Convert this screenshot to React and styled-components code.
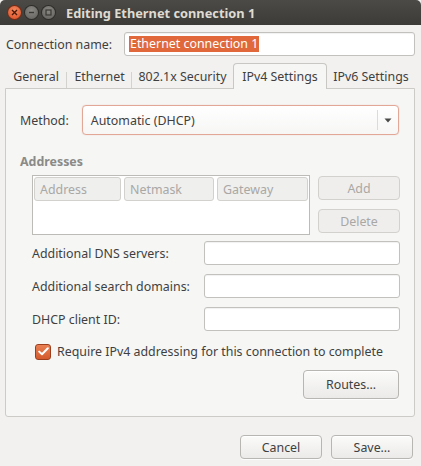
import React from "react";
import styled, { createGlobalStyle } from "styled-components";

const Global = createGlobalStyle`
  html, body { margin: 0; padding: 0; background: #f2f1f0; }
  body { width: 421px; height: 466px; overflow: hidden; font-family: "Noto Sans", "DejaVu Sans", sans-serif; font-size: 12.4px; color: #3c3c3c; }
  * { box-sizing: border-box; }
`;

const Window = styled.div`
  width: 421px;
  height: 466px;
  display: flex;
  flex-direction: column;
  background: #f2f1f0;
`;

const TitleBar = styled.div`
  height: 25px;
  display: flex;
  align-items: center;
  padding-left: 8px;
  background: linear-gradient(#4b4a46, #3c3b37);
  border-radius: 5px 5px 0 0;
`;

const WinButtons = styled.div`
  display: flex;
  gap: 4px;
  width: 58px;
`;

const WinBtn = styled.div`
  width: 13px;
  height: 13px;
  border-radius: 50%;
  background: ${p => (p.$close ? "radial-gradient(circle at 50% 35%, #f48a60, #df4a1f)" : "radial-gradient(circle at 50% 35%, #8a8984, #5f5e5a)")};
  box-shadow: 0 0 0 1px ${p => (p.$close ? "#7a2a12" : "#2e2d2a")};
  display: flex;
  align-items: center;
  justify-content: center;
`;

const Title = styled.div`
  color: #dfdbd2;
  font-weight: bold;
  font-size: 12.8px;
`;

const Body = styled.div`
  flex: 1;
  display: flex;
  flex-direction: column;
  padding: 7px 6px 0 5px;
`;

const NameRow = styled.div`
  display: flex;
  align-items: center;
  justify-content: space-between;
  padding-left: 1px;
`;

const Label = styled.span`
  color: #3f3f3f;
  white-space: nowrap;
`;

const Entry = styled.div`
  width: ${p => p.$w}px;
  height: 24px;
  background: #ffffff;
  border: 1px solid #c3c1bd;
  border-radius: 3px;
  box-shadow: inset 0 1px 1px rgba(0,0,0,0.06);
  display: flex;
  align-items: center;
  padding-left: 4px;
`;

const Selected = styled.span`
  background: #e0683a;
  color: #ffffff;
  line-height: 16px;
  padding: 0 1px;
`;

const TabBar = styled.div`
  display: flex;
  align-items: flex-end;
  margin-top: 6px;
  height: 26px;
  position: relative;
  z-index: 1;
`;

const Tab = styled.div`
  width: ${p => p.$w}px;
  height: ${p => (p.$active ? 26 : 24)}px;
  display: flex;
  align-items: center;
  justify-content: center;
  position: relative;
  color: #3f3f3f;
  white-space: nowrap;
  ${p =>
    p.$active
      ? `
    background: #f6f6f5;
    border: 1px solid #c9c7c3;
    border-bottom: none;
    border-radius: 4px 4px 0 0;
    margin-bottom: -1px;
    height: 26px;
    padding-bottom: 1px;
  `
      : ""}
  &::after {
    content: "";
    display: ${p => (p.$sep ? "block" : "none")};
    position: absolute;
    right: 0;
    bottom: 0;
    height: 16px;
    width: 1px;
    background: #d4d2ce;
  }
`;

const Panel = styled.div`
  height: 329px;
  background: #f6f6f5;
  border: 1px solid #cdcbc7;
  border-radius: 0 0 3px 3px;
  padding: 16px 15px 0 14px;
  display: flex;
  flex-direction: column;
`;

const MethodRow = styled.div`
  display: flex;
  align-items: center;
  gap: 13px;
`;

const Combo = styled.div`
  flex: 1;
  height: 30px;
  border: 1px solid #e2a796;
  border-radius: 4px;
  background: linear-gradient(#ffffff, #f7f6f5);
  box-shadow: 0 0 1px rgba(220, 120, 90, 0.5);
  display: flex;
  align-items: center;
  padding-left: 8px;
`;

const ComboText = styled.span`
  flex: 1;
  color: #3f3f3f;
`;

const ComboSep = styled.div`
  width: 1px;
  height: 20px;
  background: #dddbd8;
`;

const Arrow = styled.div`
  width: 20px;
  display: flex;
  justify-content: center;
`;

const SectionTitle = styled.div`
  margin-top: 17px;
  font-weight: bold;
  color: #8a8a88;
  height: 18px;
  display: flex;
  align-items: center;
`;

const AddrArea = styled.div`
  display: flex;
  gap: 8px;
  margin-top: 5px;
  padding-left: 12px;
`;

const Table = styled.div`
  width: 278px;
  height: 60px;
  background: #ffffff;
  border: 1px solid #bdbbb7;
  padding: 1px;
  display: flex;
  align-items: flex-start;
  gap: 3px;
`;

const Header = styled.div`
  width: ${p => p.$w}px;
  height: 24px;
  background: #efefee;
  border: 1px solid #d3d1ce;
  border-radius: 3px;
  color: #a9a8a5;
  display: flex;
  align-items: center;
  padding-left: 5px;
`;

const SideButtons = styled.div`
  display: flex;
  flex-direction: column;
  gap: 9px;
  padding-top: 1px;
`;

const Button = styled.div`
  width: ${p => p.$w}px;
  height: ${p => p.$h || 24}px;
  border: 1px solid ${p => (p.$disabled ? "#d3d1ce" : "#b8b6b2")};
  border-radius: 4px;
  background: ${p => (p.$disabled ? "#efeeed" : "linear-gradient(#fbfbfa, #ebeae8)")};
  color: ${p => (p.$disabled ? "#a9a8a5" : "#3f3f3f")};
  display: flex;
  align-items: center;
  justify-content: center;
  box-shadow: ${p => (p.$disabled ? "none" : "0 1px 0 rgba(255,255,255,0.8), inset 0 1px 0 #ffffff")};
`;

const FormGrid = styled.div`
  display: grid;
  grid-template-columns: 172px 196px;
  row-gap: 9px;
  align-items: center;
  margin-top: 6px;
  padding-left: 12px;
`;

const CheckRow = styled.div`
  display: flex;
  align-items: center;
  gap: 6px;
  margin-top: 12px;
  padding-left: 15px;
`;

const Check = styled.div`
  width: 16px;
  height: 16px;
  border-radius: 3px;
  background: linear-gradient(#e98155, #d45a2c);
  border: 1px solid #9d3f1d;
  display: flex;
  align-items: center;
  justify-content: center;
`;

const RoutesRow = styled.div`
  display: flex;
  justify-content: flex-end;
  margin-top: 10px;
`;

const Footer = styled.div`
  display: flex;
  justify-content: flex-end;
  gap: 9px;
  margin-top: 18px;
  padding-right: 2px;
`;

export default function App() {
  return (
    <Window>
      <Global />
      <TitleBar>
        <WinButtons>
          <WinBtn $close>
            <svg width="7" height="7" viewBox="0 0 7 7">
              <path d="M1 1L6 6M6 1L1 6" stroke="#4a1a0a" strokeWidth="1.4" />
            </svg>
          </WinBtn>
          <WinBtn>
            <svg width="7" height="7" viewBox="0 0 7 7">
              <path d="M1 3.5H6" stroke="#3a3935" strokeWidth="1.4" />
            </svg>
          </WinBtn>
          <WinBtn>
            <svg width="7" height="7" viewBox="0 0 7 7">
              <rect x="1" y="1" width="5" height="5" fill="none" stroke="#3a3935" strokeWidth="1.2" />
            </svg>
          </WinBtn>
        </WinButtons>
        <Title>Editing Ethernet connection 1</Title>
      </TitleBar>
      <Body>
        <NameRow>
          <Label>Connection name:</Label>
          <Entry $w={291}>
            <Selected>Ethernet connection 1</Selected>
          </Entry>
        </NameRow>
        <TabBar>
          <Tab $w={62} $sep>General</Tab>
          <Tab $w={65} $sep>Ethernet</Tab>
          <Tab $w={101}>802.1x Security</Tab>
          <Tab $w={94} $active>IPv4 Settings</Tab>
          <Tab $w={88}>IPv6 Settings</Tab>
        </TabBar>
        <Panel>
          <MethodRow>
            <Label>Method:</Label>
            <Combo>
              <ComboText>Automatic (DHCP)</ComboText>
              <ComboSep />
              <Arrow>
                <svg width="8" height="5" viewBox="0 0 8 5">
                  <path d="M0.5 0.5H7.5L4 4.5Z" fill="#4a4a48" />
                </svg>
              </Arrow>
            </Combo>
          </MethodRow>
          <SectionTitle>Addresses</SectionTitle>
          <AddrArea>
            <Table>
              <Header $w={87}>Address</Header>
              <Header $w={90}>Netmask</Header>
              <Header $w={91}>Gateway</Header>
            </Table>
            <SideButtons>
              <Button $w={82} $disabled>Add</Button>
              <Button $w={82} $disabled>Delete</Button>
            </SideButtons>
          </AddrArea>
          <FormGrid>
            <Label>Additional DNS servers:</Label>
            <Entry $w={196} />
            <Label>Additional search domains:</Label>
            <Entry $w={196} />
            <Label>DHCP client ID:</Label>
            <Entry $w={196} />
          </FormGrid>
          <CheckRow>
            <Check>
              <svg width="11" height="9" viewBox="0 0 11 9">
                <path d="M1.2 4.6L4 7.3L9.8 1.3" stroke="#ffffff" strokeWidth="2" fill="none" strokeLinecap="round" strokeLinejoin="round" />
              </svg>
            </Check>
            <Label>Require IPv4 addressing for this connection to complete</Label>
          </CheckRow>
          <RoutesRow>
            <Button $w={96} $h={29}>Routes…</Button>
          </RoutesRow>
        </Panel>
        <Footer>
          <Button $w={82}>Cancel</Button>
          <Button $w={82}>Save…</Button>
        </Footer>
      </Body>
    </Window>
  );
}
